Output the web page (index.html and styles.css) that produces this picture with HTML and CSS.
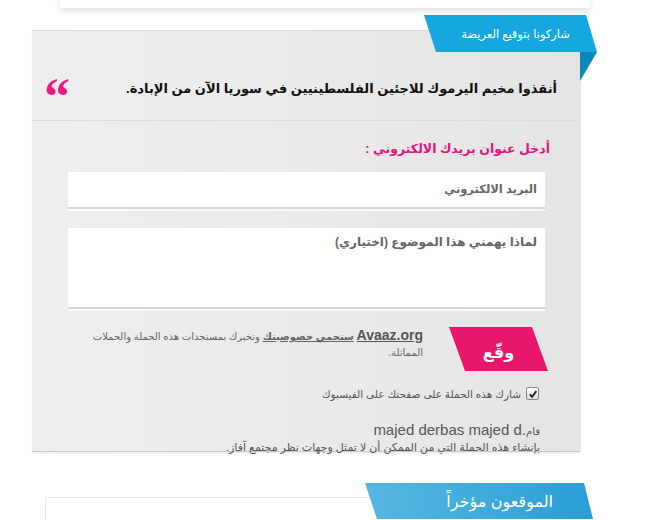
FILE: index.html
```html
<!DOCTYPE html>
<html lang="ar">
<head>
<meta charset="utf-8">
<link rel="stylesheet" href="styles.css">
</head>
<body>
<div class="topcard"></div>
<div class="panel" dir="rtl">
  <div class="ribbon"><span>شاركونا بتوقيع العريضة</span></div>
  <div class="fold"></div>
  <div class="quote">
    <p class="quote-text">أنقذوا مخيم اليرموك للاجئين الفلسطينيين في سوريا الآن من الإبادة.</p>
    <span class="quote-mark">&#8220;</span>
  </div>
  <div class="form">
    <p class="label">أدخل عنوان بريدك الالكتروني :</p>
    <div class="field input">البريد الالكتروني</div>
    <div class="field textarea">لماذا يهمني هذا الموضوع (اختياري)</div>
    <div class="sign-row">
      <div class="sign-btn">وقّع</div>
      <p class="privacy"><a class="brand" href="#">Avaaz.org</a> <a class="priv" href="#">ستحمي خصوصيتك</a> وتخبرك بمستجدات هذه الحملة والحملات المماثلة.</p>
    </div>
    <label class="share"><span class="check"><svg viewBox="0 0 12 12" width="10" height="10"><path d="M2 6.5 L4.8 9.3 L10 2.5" fill="none" stroke="#222" stroke-width="2.2"/></svg></span>شارك هذه الحملة على صفحتك على الفيسبوك</label>
    <p class="author"><span class="by">قام</span>.<span dir="ltr">majed derbas majed d</span></p>
    <p class="disclaimer">بإنشاء هذه الحملة التي من الممكن أن لا تمثل وجهات نظر مجتمع آفاز.</p>
  </div>
</div>
<div class="recent" dir="rtl">
  <div class="recent-ribbon"><span>الموقعون مؤخراً</span></div>
</div>
</body>
</html>
```

FILE: styles.css
```css
* { box-sizing: border-box; }
html, body { margin: 0; padding: 0; background: #fff; }
body { font-family: "Liberation Sans", "DejaVu Sans", sans-serif; width: 660px; height: 520px; overflow: hidden; }

.topcard {
  margin: -40px 70px 0 60px;
  height: 48px;
  background: #fff;
  box-shadow: 0 3px 6px rgba(0,0,0,0.12);
}

.panel {
  position: relative;
  margin: 22px 0 0 32px;
  width: 548px;
  height: 422px;
  background: linear-gradient(to right, #eeeeee, #e9e9e9 60%, #e4e4e4);
  border-top: 1px solid #d8d8d8;
  border-bottom: 1px solid #c9c9c9;
  box-shadow: 0 2px 2px rgba(0,0,0,0.06), 1px 0 1px rgba(0,0,0,0.08);
}

.ribbon {
  position: absolute;
  top: -16px;
  right: -17px;
  width: 173px;
  height: 37px;
  background: #15a7e0;
  clip-path: polygon(0 0, 162px 0, 173px 37px, 12px 37px);
  display: flex;
  align-items: center;
  padding-right: 27px;
}
.ribbon span { color: #fff; font-size: 11.5px; }
.fold {
  position: absolute;
  top: 21px;
  right: -17px;
  width: 17px;
  height: 29px;
  background: #0b87bd;
  clip-path: polygon(0 0, 100% 0, 0 100%);
}

.quote {
  height: 90px;
  border-bottom: 1px solid #dcdcdc;
  display: flex;
  align-items: flex-end;
  padding: 0 23px 24px 12px;
  justify-content: space-between;
}
.quote-text { margin: 0; font-size: 13px; font-weight: bold; color: #111; white-space: nowrap; }
.quote-mark {
  font-size: 52px;
  font-weight: bold;
  color: #ec1a80;
  line-height: 20px;
  height: 16px;
  font-family: "Liberation Serif", serif;
  position: relative;
  top: 7px;
}

.form { padding: 20px 35px 0 36px; }
.label { margin: 0 -5px 15px 0; color: #e6127c; font-weight: bold; font-size: 12.5px; line-height: 16px; }

.field {
  background: #fff;
  color: #666;
  font-weight: bold;
  box-shadow: 0 2px 0 #d6d6d6, 0 4px 0 #fafafa;
  padding: 10px 8px;
}
.input { height: 35px; margin-bottom: 21px; font-size: 11.5px; }
.textarea { height: 79px; margin-bottom: 20px; font-size: 12px; padding-top: 7px; }

.sign-row { display: flex; align-items: flex-start; gap: 26px; margin-right: -3px; }
.sign-btn {
  flex: none;
  width: 99px;
  height: 44px;
  background: #e9166e;
  clip-path: polygon(0 0, 83px 0, 99px 44px, 16px 44px);
  color: #fff;
  font-weight: bold;
  font-size: 16px;
  display: flex;
  align-items: center;
  justify-content: center;
  padding-top: 6px;
}
.privacy { margin: 0; font-size: 10px; color: #666; line-height: 16px; padding-top: 1px; }
.privacy a { color: #666; text-decoration: underline; font-weight: bold; }
.privacy .brand { font-size: 14px; color: #555; display: inline-block; line-height: 15px; }

.share { display: flex; align-items: center; gap: 5px; margin: 16px 6px 0 0; font-size: 10.5px; color: #555; }
.check {
  width: 13px; height: 13px;
  border: 1px solid #888;
  border-radius: 2px;
  background: linear-gradient(#fff, #ddd);
  display: flex; align-items: center; justify-content: center;
}

.author { margin: 21px 5px 0 0; font-size: 15px; color: #555; line-height: 17px; }
.author .by { font-size: 10px; }
.disclaimer { margin: 0 5px 0 0; font-size: 11px; color: #555; line-height: 15px; }

.recent {
  position: relative;
  margin: 45px 0 0 45px;
  width: 532px;
  height: 60px;
  border: 1px solid #e8e8e8;
  background: #fff;
}
.recent-ribbon {
  position: absolute;
  top: -15px;
  right: -17px;
  width: 228px;
  height: 36px;
  background: linear-gradient(to right, #56b7e0, #2a9ed6);
  clip-path: polygon(0 0, 219px 0, 228px 36px, 12px 36px);
  display: flex; align-items: center;
  padding-right: 40px;
}
.recent-ribbon span { color: #fff; font-size: 16px; }
```
